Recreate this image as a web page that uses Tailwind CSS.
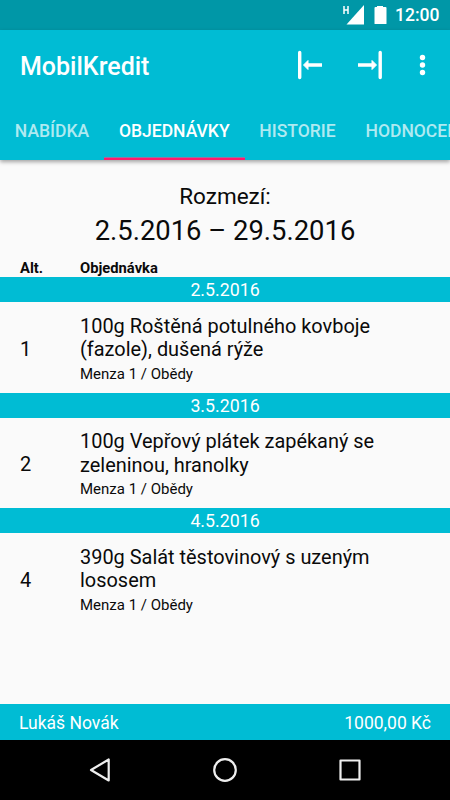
<!DOCTYPE html>
<html lang="cs">

<head>
    <meta charset="UTF-8">
    <meta name="viewport" content="width=device-width, initial-scale=1.0">
    <title>MobilKredit</title>
    <script src="https://cdn.jsdelivr.net/npm/@tailwindcss/browser@4"></script>
</head>

<body class="bg-[#fafafa] font-['Roboto',sans-serif] text-[#0a0a0a]">
    <div class="w-[450px] h-[800px] flex flex-col overflow-hidden">
        <!-- status bar -->
        <div class="h-[30px] shrink-0 bg-[#0097a7] text-white flex items-center">
            <svg class="w-[55px] h-[30px] ml-[340px] shrink-0" viewBox="0 0 55 30" fill="none">
                <path d="M4 6v8M8 6v8M4 10h4" stroke="#fff" stroke-width="1.500" />
                <path d="M24 5v19.500H6.500z" fill="#fff" />
                <path d="M34.500 8q0-1 1-1H37V6h6v1h2.500q1 0 1 1v15.500q0 .500-.500.500H35q-.500 0-.500-.500z" fill="#fff" />
            </svg>
            <span class="text-[17.500px] font-medium pt-[1px]">12:00</span>
        </div>

        <!-- toolbar and tabs -->
        <div class="h-[130px] shrink-0 bg-[#00bcd4] text-white shadow-[0_2px_4px_rgba(0,0,0,0.35)]">
            <div class="h-[70px] flex items-center pl-5">
                <h1 class="text-[25px] font-medium flex-1 pt-[4px]">MobilKredit</h1>
                <svg class="w-[152px] h-[40px]" viewBox="0 0 152 40" fill="none" stroke="#fff" stroke-width="3">
                    <path d="M1.700 7.500v25M82.200 7.500v25" stroke-width="3.400" stroke-linecap="round" />
                    <path d="M10 20h14M60 20h14" stroke-width="3.300" />
                    <path d="M5.500 20l4.500-4.500v9zM78.500 20L74 15.500v9z" fill="#fff" stroke-width="1" stroke-linejoin="round" />
                    <g fill="#fff" stroke="none">
                        <circle cx="124.500" cy="12.500" r="2.700" />
                        <circle cx="124.500" cy="20" r="2.700" />
                        <circle cx="124.500" cy="27.500" r="2.700" />
                    </g>
                </svg>
            </div>
            <div class="h-[60px] flex text-[17.500px] font-medium whitespace-nowrap text-white/70">
                <div class="w-[104px] shrink-0 flex items-center justify-center pt-[3px]">NABÍDKA</div>
                <div class="w-[140.500px] shrink-0 flex items-center justify-center pt-[5px] border-b-2 border-[#ff1a6c] shadow-[inset_0_-1px_0_rgba(255,64,129,0.6)] text-white">OBJEDNÁVKY</div>
                <div class="w-[106px] shrink-0 flex items-center justify-center pt-[3px]">HISTORIE</div>
                <div class="shrink-0 flex items-center pl-[15px] pt-[3px]">HODNOCENÍ</div>
            </div>
        </div>

        <!-- orders -->
        <div class="flex-1">
            <div class="pt-[21px] text-center">
                <p class="text-[22.500px] leading-[30px]">Rozmezí:</p>
                <p class="text-[27.400px] leading-[37px] pt-[2px]">2.5.2016 – 29.5.2016</p>
            </div>
            <div class="mt-[9px] h-[18px] flex pl-5 text-[14.750px] leading-[18px] font-bold">
                <span class="w-[60px]">Alt.</span><span>Objednávka</span>
            </div>

            <div class="h-[25px] bg-[#00bcd4] text-white text-center text-[17.750px] leading-[26px]">2.5.2016</div>
            <div class="h-[90.500px] flex items-center pl-5">
                <div class="w-[60px] text-[20px] pt-[3px]">1</div>
                <div class="w-[320px] pt-[6px]">
                    <p class="text-[19.930px] leading-[23.500px]">100g Roštěná potulného kovboje<br>(fazole), dušená rýže</p>
                    <p class="text-[15px] leading-[24px]">Menza 1 / Obědy</p>
                </div>
            </div>

            <div class="h-[25px] bg-[#00bcd4] text-white text-center text-[17.750px] leading-[26px]">3.5.2016</div>
            <div class="h-[90.500px] flex items-center pl-5">
                <div class="w-[60px] text-[20px] pt-[3px]">2</div>
                <div class="w-[320px] pt-[6px]">
                    <p class="text-[19.930px] leading-[23.500px]">100g Vepřový plátek zapékaný se<br>zeleninou, hranolky</p>
                    <p class="text-[15px] leading-[24px]">Menza 1 / Obědy</p>
                </div>
            </div>

            <div class="h-[25px] bg-[#00bcd4] text-white text-center text-[17.750px] leading-[26px]">4.5.2016</div>
            <div class="h-[90.500px] flex items-center pl-5">
                <div class="w-[60px] text-[20px] pt-[3px]">4</div>
                <div class="w-[320px] pt-[6px]">
                    <p class="text-[19.930px] leading-[23.500px]">390g Salát těstovinový s uzeným<br>lososem</p>
                    <p class="text-[15px] leading-[24px]">Menza 1 / Obědy</p>
                </div>
            </div>
        </div>

        <!-- account -->
        <div class="h-[36px] shrink-0 bg-[#00bcd4] text-white text-[17.500px] flex items-center justify-between px-[19px] pt-[3px]">
            <span>Lukáš Novák</span>
            <span>1000,00 Kč</span>
        </div>

        <!-- navigation bar -->
        <div class="h-[60px] shrink-0 bg-black">
            <svg class="w-[450px] h-[60px]" viewBox="0 0 450 60" fill="none" stroke="#eee" stroke-width="2.200" stroke-linejoin="round">
                <path d="M91 30l17.700-10.500v21z" />
                <circle cx="225" cy="30" r="10.800" />
                <path d="M340.500 20.500h19v19h-19z" />
            </svg>
        </div>
    </div>
</body>

</html>
